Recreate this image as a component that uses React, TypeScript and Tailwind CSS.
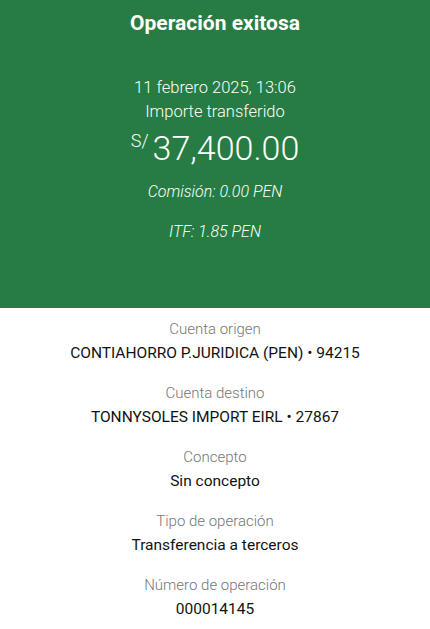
import React from 'react';

const rows = [
  { label: 'Cuenta origen', value: 'CONTIAHORRO P.JURIDICA (PEN) • 94215' },
  { label: 'Cuenta destino', value: 'TONNYSOLES IMPORT EIRL • 27867' },
  { label: 'Concepto', value: 'Sin concepto' },
  { label: 'Tipo de operación', value: 'Transferencia a terceros' },
  { label: 'Número de operación', value: '000014145' },
];

export default function App() {
  return (
    <div className="w-[430px] h-[629px] overflow-hidden bg-white font-['Roboto',sans-serif]">
      <div className="h-[308px] bg-[#267c42] flex flex-col items-center pt-2 text-white">
        <h1 className="text-[21px] leading-7 mt-[1px] font-bold">Operación exitosa</h1>
        <p className="mt-[39px] text-[16.5px] leading-6 font-light">11 febrero 2025, 13:06</p>
        <p className="text-[16.5px] leading-6 font-light">Importe transferido</p>
        <div className="mt-1 flex items-start font-light">
          <span className="text-lg leading-5 mt-[3px] mr-1">S/</span>
          <span className="text-[34px] leading-10">37,400.00</span>
        </div>
        <p className="mt-3 text-base leading-6 font-light italic">Comisión: 0.00 PEN</p>
        <p className="mt-4 text-base leading-6 font-light italic">ITF: 1.85 PEN</p>
      </div>
      <div className="flex flex-col items-center pt-[9px] gap-4">
        {rows.map((r) => (
          <div key={r.label} className="flex flex-col items-center">
            <span className="text-[15px] leading-6 text-[#767676] font-light">{r.label}</span>
            <span className="text-[15.5px] leading-6 text-[#121212]">{r.value}</span>
          </div>
        ))}
      </div>
    </div>
  );
}
